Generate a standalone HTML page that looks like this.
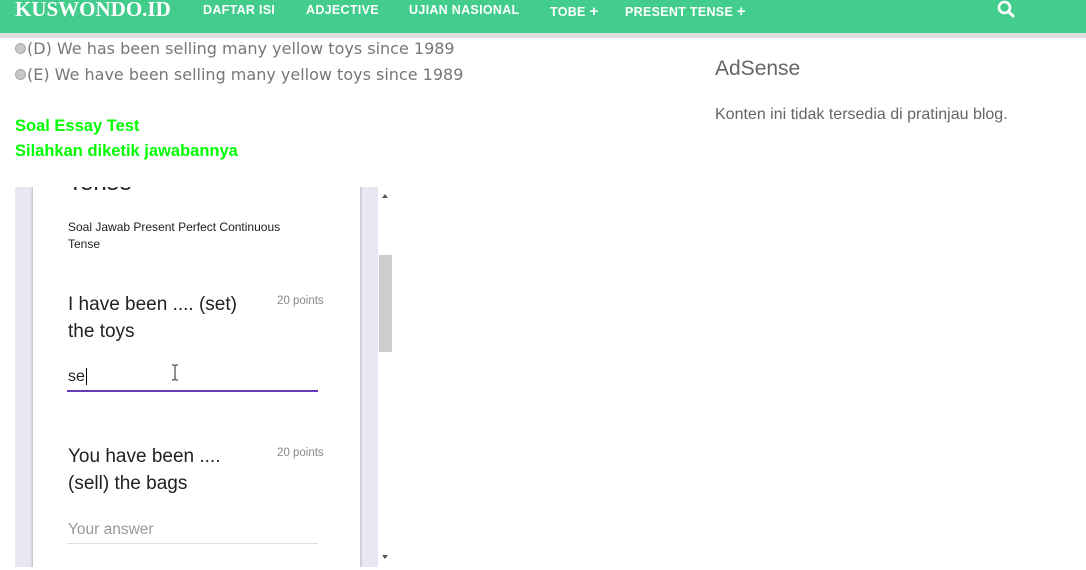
<!DOCTYPE html>
<html><head><meta charset="utf-8"><style>
*{margin:0;padding:0;box-sizing:border-box}
body{width:1086px;height:570px;overflow:hidden;background:#fff;font-family:"Liberation Sans",sans-serif;position:relative}
.nav{position:absolute;left:0;top:0;width:1086px;background:#43cd8d;border-bottom:5px solid #dedede;height:38px}
.nav .in{position:absolute;top:0;height:33px;left:0;right:0}
.logo{position:absolute;left:15px;top:-3px;font-family:"Liberation Serif",serif;font-weight:bold;font-size:21px;color:#fff}
.ni{position:absolute;top:3px;color:#fff;font-weight:bold;font-size:12.5px;letter-spacing:.3px}
.opt{position:absolute;left:15px;font-family:"DejaVu Sans",sans-serif;font-size:16px;color:#777}
.opt i{display:inline-block;width:11px;height:11px;border-radius:50%;background:#c8c8c8;border:1px solid #aaa;margin-right:1px;vertical-align:0}
.g{position:absolute;left:15px;color:#00ff00;font-weight:bold;font-size:16.5px}
.frame{position:absolute;left:15px;top:187px;width:377px;height:380px;background:#ebe6f3;overflow:hidden}
.card{position:absolute;left:18px;top:-10px;width:327px;height:400px;background:#fff;box-shadow:0 0 3px rgba(0,0,0,.35)}
.sb{position:absolute;left:363px;top:0;width:14px;height:380px;background:#fff}
.t{position:absolute;color:#202124}
</style></head><body>
<div class="nav"><div class="in">
<div class="logo">KUSWONDO.ID</div>
<div class="ni" style="left:203px">DAFTAR ISI</div>
<div class="ni" style="left:306px">ADJECTIVE</div>
<div class="ni" style="left:409px">UJIAN NASIONAL</div>
<div class="ni" style="left:550px">TOBE <span style="font-size:15px">+</span></div>
<div class="ni" style="left:625px">PRESENT TENSE <span style="font-size:15px">+</span></div>
<svg style="position:absolute;left:997px;top:0" width="19" height="18" viewBox="0 0 19 18"><circle cx="7.5" cy="7.5" r="5.5" fill="none" stroke="#fff" stroke-width="2.6"/><line x1="11.5" y1="11.5" x2="16" y2="16" stroke="#fff" stroke-width="3" stroke-linecap="round"/></svg>
</div></div>
<div class="opt" style="top:39px"><i></i>(D) We has been selling many yellow toys since 1989</div>
<div class="opt" style="top:65px"><i></i>(E) We have been selling many yellow toys since 1989</div>
<div class="g" style="top:117px">Soal Essay Test</div>
<div class="g" style="top:142px">Silahkan diketik jawabannya</div>
<div style="position:absolute;left:715px;top:57px;font-size:21px;color:#666">AdSense</div>
<div style="position:absolute;left:715px;top:106px;font-size:16px;color:#666">Konten ini tidak tersedia di pratinjau blog.</div>
<div class="frame">
<div class="card">
<div class="t" style="left:35px;top:-8px;font-size:24px">Tense</div>
<div class="t" style="left:35px;top:42px;font-size:12px;line-height:17px;width:240px">Soal Jawab Present Perfect Continuous Tense</div>
<div class="t" style="left:35px;top:114px;font-size:19px;line-height:27px;width:190px">I have been .... (set) the toys</div>
<div style="position:absolute;left:244px;top:118px;font-size:11.5px;color:#888">20 points</div>
<div class="t" style="left:35px;top:191px;font-size:16px">se<span style="border-left:1px solid #000;margin-left:1px"></span></div>
<svg style="position:absolute;left:138px;top:187px" width="8" height="17" viewBox="0 0 8 17"><path d="M1 1h2.5M4.5 1H7M4 1v15M1 16h2.5M4.5 16H7" stroke="#222" stroke-width="1" fill="none"/></svg>
<div style="position:absolute;left:34px;top:213px;width:251px;height:2px;background:#673ab7"></div>
<div class="t" style="left:35px;top:266px;font-size:19px;line-height:27px;width:190px">You have been .... (sell) the bags</div>
<div style="position:absolute;left:244px;top:270px;font-size:11.5px;color:#888">20 points</div>
<div style="position:absolute;left:35px;top:344px;font-size:15.5px;color:#999">Your answer</div>
<div style="position:absolute;left:34px;top:366px;width:251px;height:1px;background:#ddd"></div>
</div>
<div class="sb">
<div style="position:absolute;left:4px;top:7px;border:3.5px solid transparent;border-bottom:4px solid #555;border-top:0"></div>
<div style="position:absolute;left:1px;top:68px;width:13px;height:97px;background:#cdcdcd"></div>
<div style="position:absolute;left:4px;top:368px;border:3.5px solid transparent;border-top:4px solid #555;border-bottom:0"></div>
</div>
</div>
</body></html>
